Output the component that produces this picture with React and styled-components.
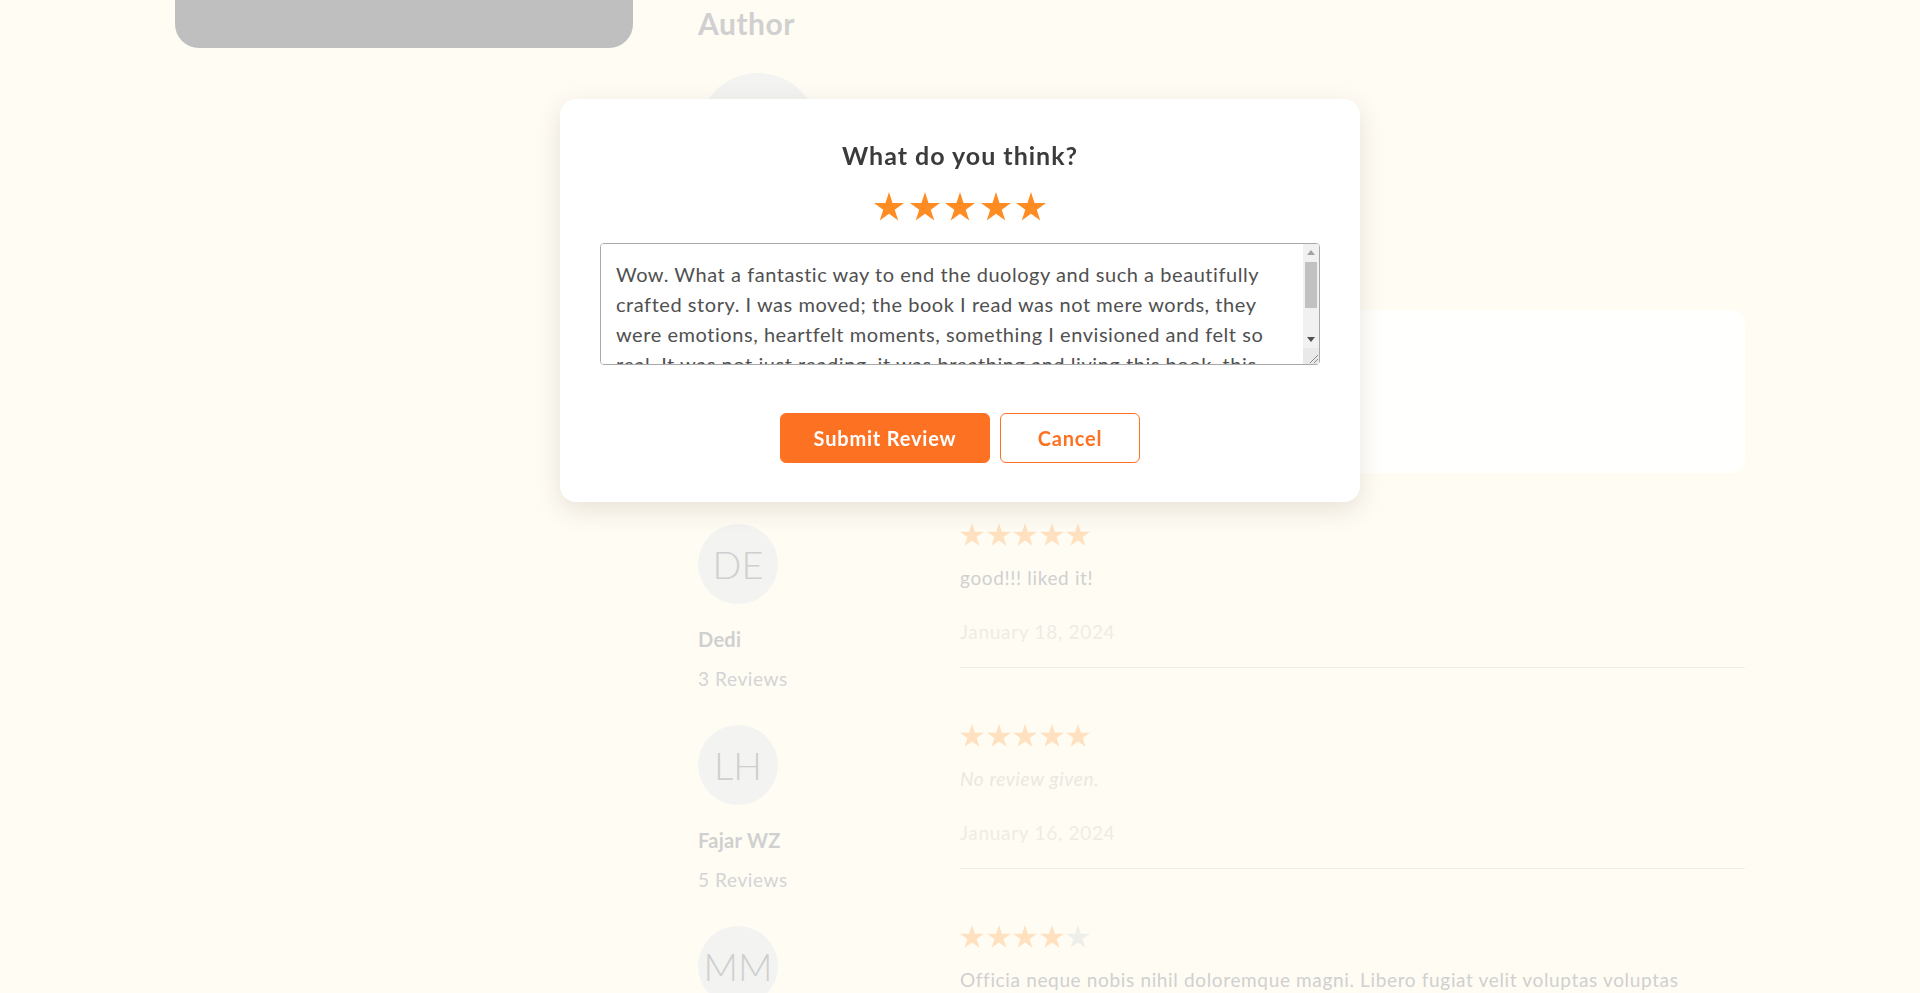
import React, { useState } from 'react';
import styled, { createGlobalStyle } from 'styled-components';

const GlobalStyle = createGlobalStyle`
  html, body {
    margin: 0;
    padding: 0;
    background: #fffcf4;
    font-family: 'Lato', 'Noto Sans', sans-serif;
  }
  * {
    box-sizing: border-box;
  }
`;

const Page = styled.div`
  width: 1570px;
  margin: 0 auto;
  display: grid;
  grid-template-columns: 458px 1fr;
  column-gap: 65px;
  align-items: start;
`;

const Cover = styled.div`
  height: 48px;
  background: #bfbfbf;
  border-radius: 0 0 24px 24px;
`;

const Main = styled.main`
  display: flex;
  flex-direction: column;
`;

const SectionTitle = styled.h2`
  margin: 5px 0 0;
  font-size: 30px;
  line-height: 36px;
  font-weight: 700;
  letter-spacing: 0.5px;
  color: #d0d0d0;
`;

const AuthorRow = styled.div`
  display: flex;
  align-items: flex-start;
  gap: 24px;
  margin-top: 32px;
`;

const Avatar = styled.div`
  flex: none;
  width: ${(p) => p.size}px;
  height: ${(p) => p.size}px;
  border-radius: 50%;
  background: #f3f3f1;
  color: #cfcfcf;
  display: flex;
  align-items: center;
  justify-content: center;
  font-size: ${(p) => Math.round(p.size * 0.47)}px;
  font-weight: 300;
`;

const AuthorInfo = styled.div`
  padding-top: 30px;
  color: #d0d0d0;
  font-size: 20px;
`;

const WriteCard = styled.div`
  margin-top: 117px;
  height: 163px;
  background: #fffffd;
  border-radius: 14px;
`;

const ReviewList = styled.div`
  margin-top: 50px;
  display: flex;
  flex-direction: column;
`;

const ReviewRow = styled.div`
  display: flex;
  align-items: flex-start;
  margin-bottom: 33px;
`;

const Reviewer = styled.div`
  flex: none;
  width: 262px;
  padding-top: 1px;
`;

const ReviewerName = styled.div`
  margin-top: 23px;
  font-size: 20px;
  line-height: 24px;
  font-weight: 700;
  letter-spacing: 0.3px;
  color: #d0d0d0;
`;

const ReviewerCount = styled.div`
  margin-top: 16px;
  font-size: 19px;
  line-height: 24px;
  letter-spacing: 0.6px;
  color: #d4d4d4;
`;

const ReviewBody = styled.div`
  flex: 1;
  padding-bottom: 21px;
  border-bottom: 1px solid #f0eee8;
`;

const Stars = styled.div`
  display: flex;
  gap: ${(p) => p.gap}px;
  justify-content: ${(p) => (p.center ? 'center' : 'flex-start')};
`;

const ReviewText = styled.p`
  margin: 18px 0 0;
  max-width: 760px;
  font-size: 19px;
  line-height: 28px;
  letter-spacing: 0.65px;
  color: ${(p) => (p.empty ? '#ebe8e0' : '#d0d0d0')};
  font-style: ${(p) => (p.empty ? 'italic' : 'normal')};
`;

const ReviewDate = styled.div`
  margin-top: 26px;
  font-size: 19px;
  line-height: 28px;
  letter-spacing: 0.7px;
  color: #efece4;
`;

const Overlay = styled.div`
  position: fixed;
  inset: 0;
  display: flex;
  justify-content: center;
  align-items: flex-start;
  padding-top: 99px;
`;

const Modal = styled.div`
  width: 800px;
  background: #ffffff;
  border-radius: 16px;
  padding: 40px 40px 39px;
  box-shadow: 0 8px 26px rgba(60, 45, 20, 0.12);
  display: flex;
  flex-direction: column;
  align-items: center;
`;

const ModalTitle = styled.h3`
  margin: 0;
  font-size: 25px;
  line-height: 32px;
  font-weight: 700;
  letter-spacing: 1px;
  color: #3b3b3b;
`;

const ModalStars = styled.div`
  margin-top: 21px;
`;

const InputWrap = styled.div`
  position: relative;
  margin-top: 22px;
  width: 720px;
  height: 122px;
`;

const ReviewInput = styled.textarea`
  display: block;
  width: 100%;
  height: 100%;
  padding: 15px 32px 15px 15px;
  border: 1px solid #a9a9a9;
  border-radius: 4px;
  font-family: 'Lato', 'Noto Sans', sans-serif;
  font-size: 20px;
  line-height: 30px;
  letter-spacing: 0.55px;
  color: #505050;
  background: #fff;
  outline: none;
  resize: none;
  scrollbar-width: none;

  &::-webkit-scrollbar {
    display: none;
  }
`;

const Scrollbar = styled.div`
  position: absolute;
  top: 1px;
  right: 1px;
  bottom: 1px;
  width: 16px;
  display: flex;
  flex-direction: column;
  background: #f1f1f1;
  border-radius: 0 3px 3px 0;
  pointer-events: none;
`;

const ScrollButton = styled.div`
  height: 17px;
  display: flex;
  align-items: center;
  justify-content: center;
`;

const ScrollTrack = styled.div`
  flex: 1;
  padding: 1px 2px;
`;

const ScrollThumb = styled.div`
  height: 46px;
  background: #c1c1c1;
`;

const ScrollCorner = styled.div`
  height: 16px;
  background: #e9e9e9;
  display: flex;
  align-items: flex-end;
  justify-content: flex-end;
  padding: 0 1px 1px 0;
`;

const Actions = styled.div`
  margin-top: 48px;
  display: flex;
  gap: 10px;
`;

const Button = styled.button`
  height: 50px;
  min-width: ${(p) => (p.primary ? 210 : 140)}px;
  padding: 0 30px;
  border-radius: 6px;
  border: 1px solid #fd7222;
  background: ${(p) => (p.primary ? '#fd7222' : '#ffffff')};
  color: ${(p) => (p.primary ? '#ffffff' : '#fd7222')};
  font-family: 'Lato', 'Noto Sans', sans-serif;
  font-size: 20px;
  font-weight: 700;
  letter-spacing: 0.8px;
  cursor: pointer;
`;

const Star = ({ size, color }) => (
  <svg width={size} height={size * 0.95} viewBox="0 0 100 95">
    <polygon
      fill={color}
      points="50,0 61.8,36.3 100,36.3 69.1,58.8 80.9,95.1 50,72.7 19.1,95.1 30.9,58.8 0,36.3 38.2,36.3"
    />
  </svg>
);

const StarRating = ({ value, size, gap, color, emptyColor, center }) => (
  <Stars gap={gap} center={center}>
    {[1, 2, 3, 4, 5].map((n) => (
      <Star key={n} size={size} color={n <= value ? color : emptyColor} />
    ))}
  </Stars>
);

// drawn scrollbar, the native one is hidden by the headless browser
const FakeScrollbar = () => (
  <Scrollbar>
    <ScrollButton>
      <svg width="8" height="5" viewBox="0 0 8 5">
        <polygon points="4,0 8,5 0,5" fill="#a3a3a3" />
      </svg>
    </ScrollButton>
    <ScrollTrack>
      <ScrollThumb />
    </ScrollTrack>
    <ScrollButton>
      <svg width="8" height="5" viewBox="0 0 8 5">
        <polygon points="0,0 8,0 4,5" fill="#505050" />
      </svg>
    </ScrollButton>
    <ScrollCorner>
      <svg width="10" height="10" viewBox="0 0 10 10">
        <path d="M10 2 L2 10 M10 6 L6 10" stroke="#8a8a8a" strokeWidth="1" />
      </svg>
    </ScrollCorner>
  </Scrollbar>
);

const reviews = [
  { initials: 'DE', name: 'Dedi', count: 3, rating: 5, text: 'good!!! liked it!', date: 'January 18, 2024' },
  { initials: 'LH', name: 'Fajar WZ', count: 5, rating: 5, text: '', date: 'January 16, 2024' },
  {
    initials: 'MM',
    name: 'Maria M',
    count: 2,
    rating: 4,
    text: 'Officia neque nobis nihil doloremque magni. Libero fugiat velit voluptas voluptas quibusdam. Dolores sint eum quae aut sapiente.',
    date: 'January 12, 2024',
  },
];

const draft =
  'Wow. What a fantastic way to end the duology and such a beautifully crafted story. I was moved; the book I read was not mere words, they were emotions, heartfelt moments, something I envisioned and felt so real. It was not just reading, it was breathing and living this book, this story. I will miss these characters.';

export default function App() {
  const [text, setText] = useState(draft);

  return (
    <>
      <GlobalStyle />
      <Page>
        <Cover />
        <Main>
          <SectionTitle>Author</SectionTitle>
          <AuthorRow>
            <Avatar size={120}>RF</Avatar>
            <AuthorInfo>Rebecca F.</AuthorInfo>
          </AuthorRow>
          <WriteCard />
          <ReviewList>
            {reviews.map((r) => (
              <ReviewRow key={r.initials}>
                <Reviewer>
                  <Avatar size={80}>{r.initials}</Avatar>
                  <ReviewerName>{r.name}</ReviewerName>
                  <ReviewerCount>{r.count} Reviews</ReviewerCount>
                </Reviewer>
                <ReviewBody>
                  <StarRating value={r.rating} size={24} gap={2.5} color="#ffe1c0" emptyColor="#eeeeea" />
                  <ReviewText empty={!r.text}>{r.text || 'No review given.'}</ReviewText>
                  <ReviewDate>{r.date}</ReviewDate>
                </ReviewBody>
              </ReviewRow>
            ))}
          </ReviewList>
        </Main>
      </Page>

      <Overlay>
        <Modal>
          <ModalTitle>What do you think?</ModalTitle>
          <ModalStars>
            <StarRating value={5} size={30} gap={5.5} color="#ff8c22" emptyColor="#e5e5e5" center />
          </ModalStars>
          <InputWrap>
            <ReviewInput value={text} onChange={(e) => setText(e.target.value)} />
            <FakeScrollbar />
          </InputWrap>
          <Actions>
            <Button primary>Submit Review</Button>
            <Button>Cancel</Button>
          </Actions>
        </Modal>
      </Overlay>
    </>
  );
}
